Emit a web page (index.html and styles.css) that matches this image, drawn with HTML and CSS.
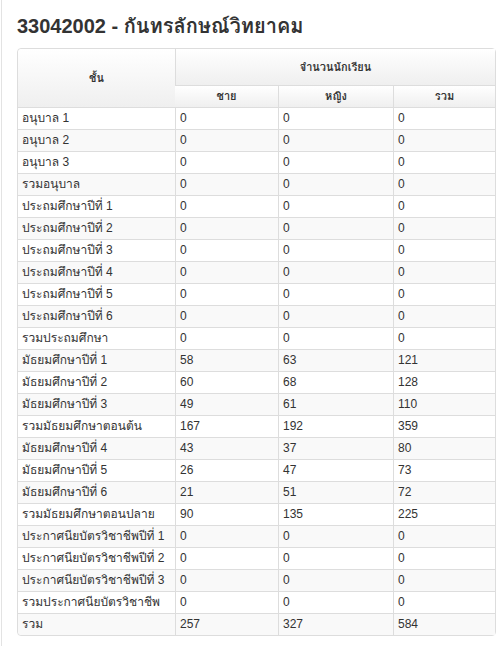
FILE: index.html
```html
<!DOCTYPE html>
<html lang="th">
<head>
<meta charset="utf-8">
<link rel="stylesheet" href="styles.css">
</head>
<body>
<div class="page">
  <h2 class="title">33042002 - กันทรลักษณ์วิทยาคม</h2>
  <table class="grid">
    <colgroup>
      <col class="c1"><col class="c2"><col class="c3"><col class="c4">
    </colgroup>
    <thead>
      <tr class="h1">
        <th rowspan="2">ชั้น</th>
        <th colspan="3">จำนวนนักเรียน</th>
      </tr>
      <tr class="h2">
        <th class="sub">ชาย</th>
        <th class="sub">หญิง</th>
        <th class="sub">รวม</th>
      </tr>
    </thead>
    <tbody>
      <tr><td>อนุบาล 1</td><td>0</td><td>0</td><td>0</td></tr>
      <tr><td>อนุบาล 2</td><td>0</td><td>0</td><td>0</td></tr>
      <tr><td>อนุบาล 3</td><td>0</td><td>0</td><td>0</td></tr>
      <tr><td>รวมอนุบาล</td><td>0</td><td>0</td><td>0</td></tr>
      <tr><td>ประถมศึกษาปีที่ 1</td><td>0</td><td>0</td><td>0</td></tr>
      <tr><td>ประถมศึกษาปีที่ 2</td><td>0</td><td>0</td><td>0</td></tr>
      <tr><td>ประถมศึกษาปีที่ 3</td><td>0</td><td>0</td><td>0</td></tr>
      <tr><td>ประถมศึกษาปีที่ 4</td><td>0</td><td>0</td><td>0</td></tr>
      <tr><td>ประถมศึกษาปีที่ 5</td><td>0</td><td>0</td><td>0</td></tr>
      <tr><td>ประถมศึกษาปีที่ 6</td><td>0</td><td>0</td><td>0</td></tr>
      <tr><td>รวมประถมศึกษา</td><td>0</td><td>0</td><td>0</td></tr>
      <tr><td>มัธยมศึกษาปีที่ 1</td><td>58</td><td>63</td><td>121</td></tr>
      <tr><td>มัธยมศึกษาปีที่ 2</td><td>60</td><td>68</td><td>128</td></tr>
      <tr><td>มัธยมศึกษาปีที่ 3</td><td>49</td><td>61</td><td>110</td></tr>
      <tr><td>รวมมัธยมศึกษาตอนต้น</td><td>167</td><td>192</td><td>359</td></tr>
      <tr><td>มัธยมศึกษาปีที่ 4</td><td>43</td><td>37</td><td>80</td></tr>
      <tr><td>มัธยมศึกษาปีที่ 5</td><td>26</td><td>47</td><td>73</td></tr>
      <tr><td>มัธยมศึกษาปีที่ 6</td><td>21</td><td>51</td><td>72</td></tr>
      <tr><td>รวมมัธยมศึกษาตอนปลาย</td><td>90</td><td>135</td><td>225</td></tr>
      <tr><td>ประกาศนียบัตรวิชาชีพปีที่ 1</td><td>0</td><td>0</td><td>0</td></tr>
      <tr><td>ประกาศนียบัตรวิชาชีพปีที่ 2</td><td>0</td><td>0</td><td>0</td></tr>
      <tr><td>ประกาศนียบัตรวิชาชีพปีที่ 3</td><td>0</td><td>0</td><td>0</td></tr>
      <tr><td>รวมประกาศนียบัตรวิชาชีพ</td><td>0</td><td>0</td><td>0</td></tr>
      <tr><td>รวม</td><td>257</td><td>327</td><td>584</td></tr>
    </tbody>
  </table>
</div>
</body>
</html>
```
FILE: styles.css
```css
html, body {
  margin: 0;
  padding: 0;
  background: #fff;
}
body {
  font-family: "Liberation Sans", "Loma", "Waree", "Garuda", "Noto Sans Thai Looped", Arial, sans-serif;
  font-size: 12px;
  color: #333;
}
.page {
  min-height: 646px;
  box-sizing: border-box;
  border-left: 1px solid #e3e3e3;
  margin-left: 1px;
  padding: 14px 0 0 15px;
}
.title {
  margin: 0 0 10px 0;
  font-size: 20px;
  line-height: 24px;
  font-weight: bold;
  color: #333;
}
.grid {
  width: 479px;
  table-layout: fixed;
  border-collapse: separate;
  border-spacing: 0;
  border: 1px solid #ddd;
  border-radius: 4px;
}
.c1 { width: 157px; }
.c2 { width: 103px; }
.c3 { width: 115px; }
.c4 { width: 102px; }
.grid th, .grid td {
  border-left: 1px solid #ddd;
  border-top: 1px solid #ddd;
  padding: 0 4px;
  line-height: 21px;
  height: 21px;
  box-sizing: border-box;
  text-align: left;
  vertical-align: middle;
  white-space: nowrap;
  overflow: hidden;
}
.grid th {
  text-align: center;
  font-weight: bold;
  font-size: 11px;
  background: linear-gradient(#ffffff, #efefef);
}
.grid tr > :first-child { border-left: none; }
.grid thead tr:first-child > th { border-top: none; }
.grid .h1 th { height: 36px; }
.grid .h1 th[rowspan] { height: 58px; border-top-left-radius: 4px; }
.grid .h2 th { height: 22px; }
.grid td { height: 22px; }
.grid tbody tr:nth-child(even) td { background: #f9f9f9; }
.grid tbody tr:last-child td:first-child { border-bottom-left-radius: 4px; }
```
